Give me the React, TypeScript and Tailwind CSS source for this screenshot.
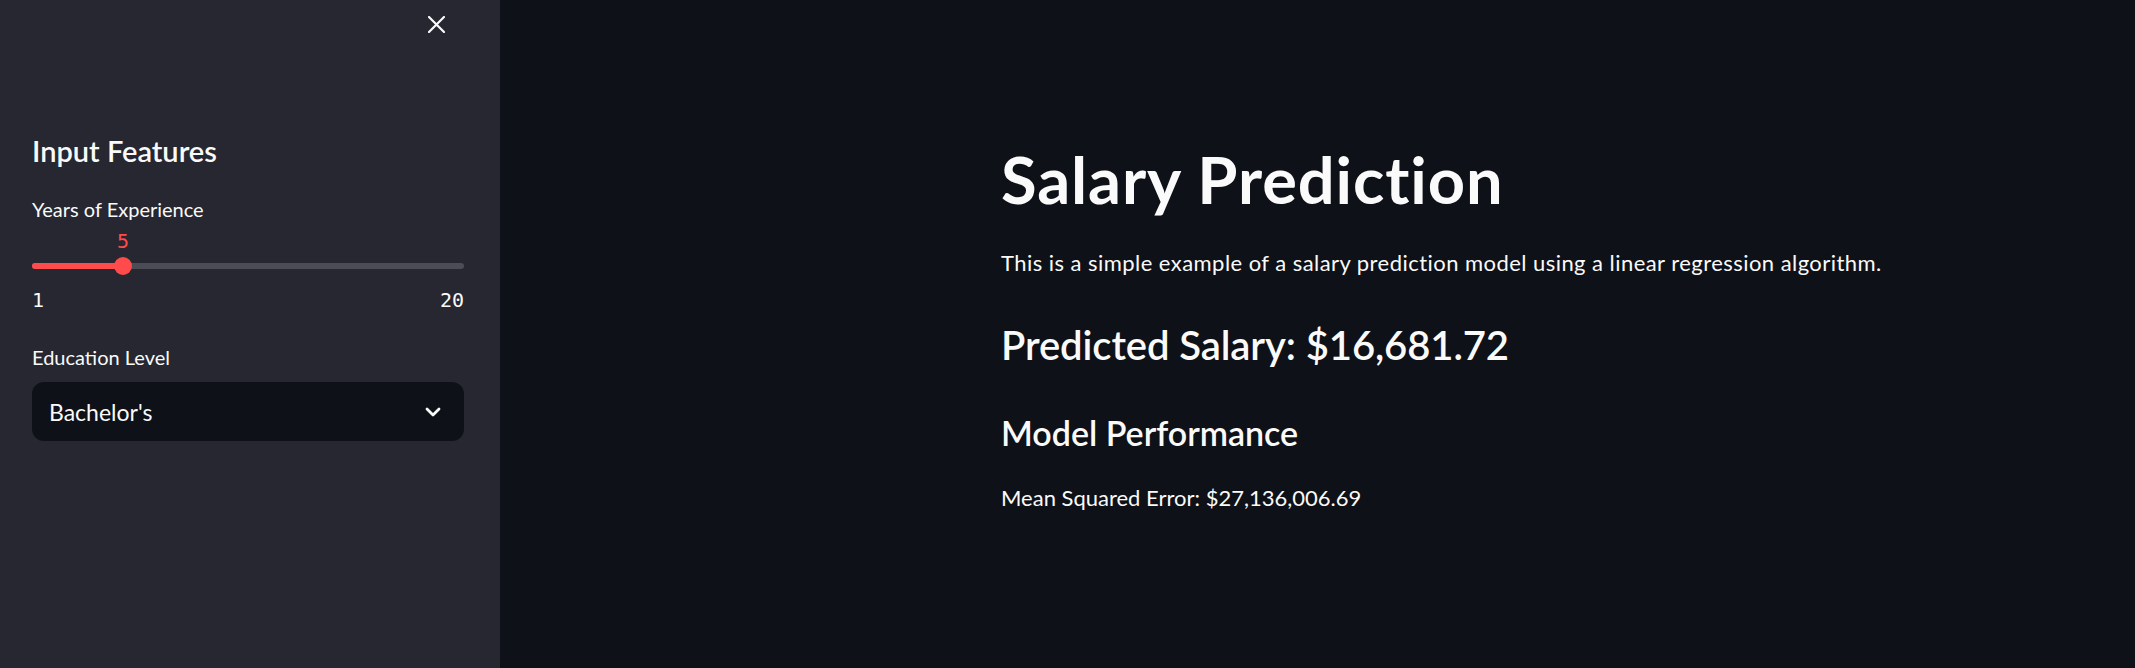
import React from 'react';

const sans = { fontFamily: 'Lato, "Noto Sans", sans-serif' };

function CloseIcon() {
  return (
    <svg width="17" height="17" viewBox="0 0 17 17" fill="none">
      <path d="M1 1L16 16M16 1L1 16" stroke="#fafafa" strokeWidth="2.2" strokeLinecap="round" />
    </svg>
  );
}

function Chevron() {
  return (
    <svg width="16" height="10" viewBox="0 0 16 10" fill="none">
      <path d="M2 2L8 8L14 2" stroke="#fafafa" strokeWidth="2.8" strokeLinecap="round" strokeLinejoin="round" />
    </svg>
  );
}

function Slider({ min, max, value }: { min: number; max: number; value: number }) {
  const pct = ((value - min) / (max - min)) * 100;
  return (
    <div className="mt-[7px]">
      <div className="relative h-6">
        <span
          className="absolute top-0 -translate-x-1/2 text-[20px] leading-6 text-[#ff4b4b] [font-family:'DejaVu_Sans_Mono',monospace]"
          style={{ left: `${pct}%` }}
        >
          {value}
        </span>
      </div>
      <div className="relative h-[26px] flex items-center">
        <div className="h-[6px] w-full rounded-full bg-[#4b4c56]" />
        <div className="absolute left-0 h-[6px] rounded-full bg-[#ff4b4b]" style={{ width: `${pct}%` }} />
        <div
          className="absolute h-[18px] w-[18px] -translate-x-1/2 rounded-full bg-[#ff4b4b]"
          style={{ left: `${pct}%` }}
        />
      </div>
      <div className="mt-[9px] flex justify-between text-[20px] leading-6 text-[#fafafa] [font-family:'DejaVu_Sans_Mono',monospace]">
        <span>{min}</span>
        <span>{max}</span>
      </div>
    </div>
  );
}

export default function App() {
  return (
    <div className="flex h-[668px] w-full bg-[#0e1117] text-[#fafafa]" style={sans}>
      <aside className="w-[500px] shrink-0 bg-[#262730]">
        <div className="flex justify-end pr-[55px] pt-[16px]">
          <CloseIcon />
        </div>
        <div className="pl-8 pr-9">
          <h2 className="mt-[100px] text-[29px] font-semibold leading-9">Input Features</h2>
          <label className="mt-[28px] block text-[20px] leading-[25px]">Years of Experience</label>
          <Slider min={1} max={20} value={5} />
          <label className="mt-[33px] block text-[20px] leading-[25px]">Education Level</label>
          <div className="mt-[12px] flex h-[59px] items-center justify-between rounded-[12px] bg-[#0e1117] pl-[17px] pr-[23px]">
            <span className="text-[23px] leading-7">Bachelor's</span>
            <Chevron />
          </div>
        </div>
      </aside>
      <main className="flex-1 pl-[501px]">
        <h1 className="mt-[143px] text-[65px] font-bold leading-[73px] tracking-[0.9px]">Salary Prediction</h1>
        <p className="mt-[34px] text-[22px] leading-[25px] tracking-[0.45px]">
          This is a simple example of a salary prediction model using a linear regression algorithm.
        </p>
        <h2 className="mt-[46px] text-[40px] font-semibold leading-[48px] tracking-[-0.1px]">Predicted Salary: $16,681.72</h2>
        <h3 className="mt-[45px] text-[34px] font-semibold leading-[38px]">Model Performance</h3>
        <p className="mt-[33px] text-[22px] leading-[25px]">Mean Squared Error: $27,136,006.69</p>
      </main>
    </div>
  );
}
